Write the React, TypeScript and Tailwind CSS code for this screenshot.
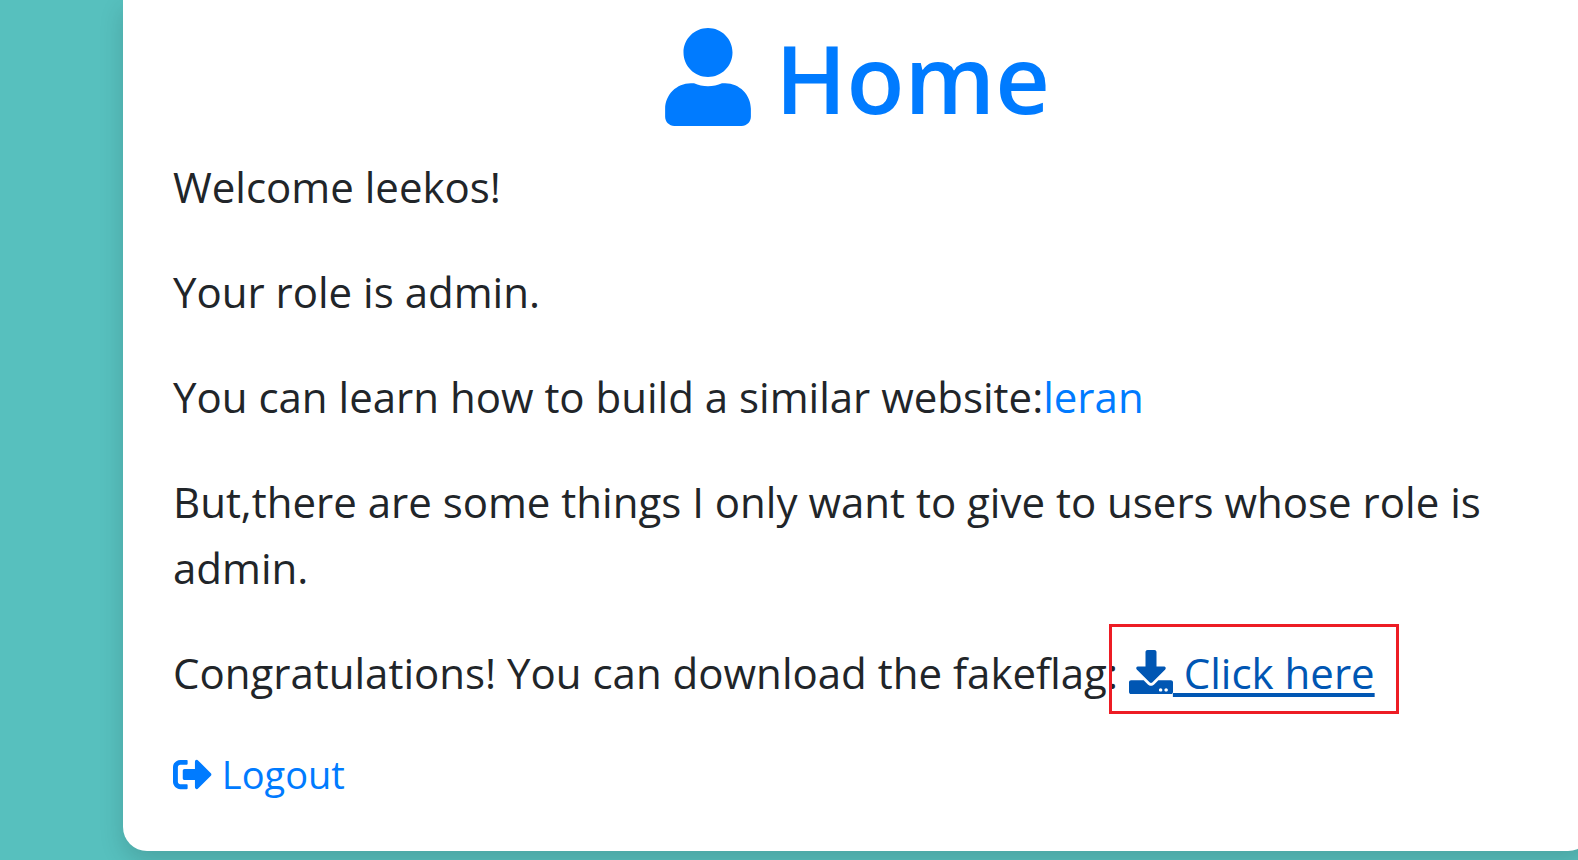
import { FaUser, FaDownload, FaSignOutAlt } from "react-icons/fa";

export default function App() {
  return (
    <div className="min-h-screen overflow-hidden bg-[#57c0be] pl-[123px] font-['Open_Sans','Noto_Sans',sans-serif] text-[#212529]">
      <main className="-mr-3.5 rounded-b-3xl bg-white px-[50px] pb-12 shadow-[0_10px_25px_rgba(0,0,0,0.15)]">
        <h1 className="flex items-center justify-center gap-6 pt-7 text-[95px] leading-[98px] font-semibold text-[#007bff]">
          <FaUser className="h-[98px] w-[86px]" />
          Home
        </h1>
        <div className="flex flex-col gap-[39px] pt-7 text-[42px] leading-[66px]">
          <p>Welcome leekos!</p>
          <p>Your role is admin.</p>
          <p>
            You can learn how to build a similar website:
            <a href="#learn" className="text-[#007bff]">leran</a>
          </p>
          <p>But,there are some things I only want to give to users whose role is admin.</p>
          <p>
            Congratulations! You can download the fakeflag:{" "}
            <span className="relative inline-block">
              <a href="#flag" className="text-[#0056b3] underline decoration-4 underline-offset-4">
                <FaDownload className="inline size-11 align-[-5px]" /> Click here
              </a>
              <span className="pointer-events-none absolute -top-4 -right-6 -bottom-2 -left-5 border-3 border-[#ed1c24]" />
            </span>
          </p>
          <a href="#logout" className="text-[38px] leading-[58px] text-[#007bff]">
            <FaSignOutAlt className="inline size-[39px] align-[-5px]" /> Logout
          </a>
        </div>
      </main>
    </div>
  );
}
